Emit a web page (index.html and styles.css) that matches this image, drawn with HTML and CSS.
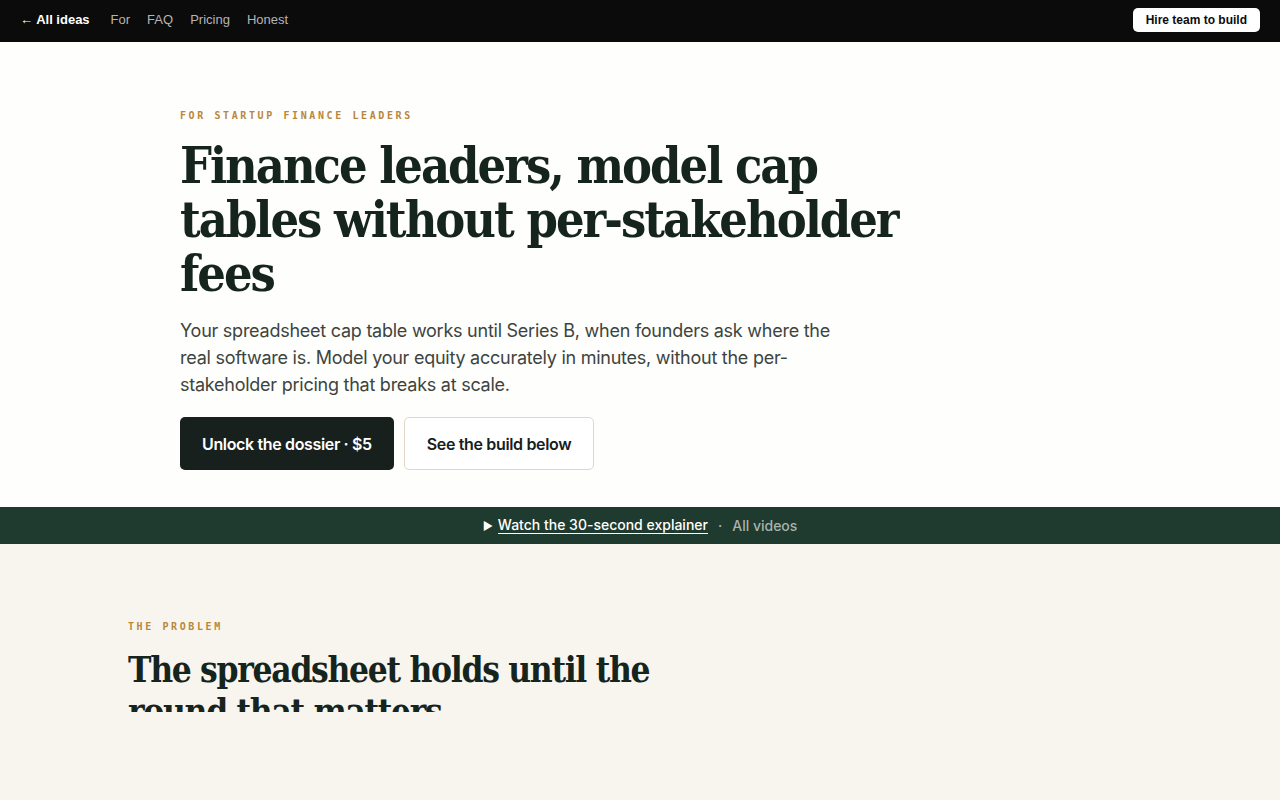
FILE: index.html
```html
<!DOCTYPE html>
<html lang="en">
<head>
    <meta charset="UTF-8">
    <meta name="viewport" content="width=device-width, initial-scale=1.0">
    <title>Cap tables for startup finance leaders</title>
    <link rel="stylesheet" href="styles.css">
</head>
<body>
    <nav class="topbar">
        <div class="topbar-links">
            <a class="back" href="#">&larr; All ideas</a>
            <a href="#">For</a>
            <a href="#">FAQ</a>
            <a href="#">Pricing</a>
            <a href="#">Honest</a>
        </div>
        <a class="hire" href="#">Hire team to build</a>
    </nav>

    <header class="hero">
        <div class="hero-inner">
            <p class="eyebrow">For startup finance leaders</p>
            <h1>Finance leaders, model cap tables without per-stakeholder fees</h1>
            <p class="lede">Your spreadsheet cap table works until Series B, when founders ask where the real software is. Model your equity accurately in minutes, without the per-stakeholder pricing that breaks at scale.</p>
            <div class="actions">
                <a class="btn btn-dark" href="#">Unlock the dossier &middot; $5</a>
                <a class="btn btn-light" href="#">See the build below</a>
            </div>
        </div>
    </header>

    <div class="video-strip">
        <span class="play">&#9654;</span>
        <a class="watch" href="#">Watch the 30-second explainer</a>
        <span class="sep">&middot;</span>
        <a class="all" href="#">All videos</a>
    </div>

    <section class="problem">
        <p class="eyebrow">The problem</p>
        <div class="reveal">
            <h2>The spreadsheet holds until the round that matters</h2>
        </div>
    </section>
</body>
</html>
```

FILE: styles.css
```css
* {
    box-sizing: border-box;
}

body {
    margin: 0;
    font-family: Inter, "Noto Sans", sans-serif;
    background: #f8f5ef;
    color: #17221d;
}

a {
    text-decoration: none;
    color: inherit;
}

/* top navigation */
.topbar {
    height: 42px;
    background: #0b0b0b;
    display: flex;
    align-items: center;
    justify-content: space-between;
    padding: 0 20px 3px;
    font-family: "Liberation Sans", Arial, sans-serif;
    font-size: 13px;
}

.topbar-links {
    display: flex;
    gap: 17px;
    color: #b4b4b4;
}

.topbar-links .back {
    color: #fff;
    font-weight: bold;
    margin-right: 4px;
}

.hire {
    background: #fff;
    color: #0b0b0b;
    font-weight: bold;
    font-size: 12px;
    padding: 5px 13px;
    border-radius: 5px;
}

/* hero */
.hero {
    background: #fefefd;
    padding: 68px 0 37px;
}

.hero-inner {
    margin-left: 180px;
    max-width: 760px;
}

.eyebrow {
    margin: 0;
    font-family: "DejaVu Sans Mono", monospace;
    font-weight: bold;
    font-size: 10px;
    letter-spacing: 2.6px;
    text-transform: uppercase;
    color: #b8873c;
}

h1 {
    margin: 18px 0 0;
    font-family: "DejaVu Serif", serif;
    font-stretch: condensed;
    font-weight: bold;
    font-size: 50px;
    line-height: 54px;
    letter-spacing: -2px;
    color: #16241e;
}

.lede {
    margin: 16px 0 0;
    max-width: 670px;
    font-size: 18px;
    line-height: 27px;
    letter-spacing: -0.25px;
    color: #3d4440;
}

.actions {
    display: flex;
    gap: 10px;
    margin-top: 19px;
}

.btn {
    display: inline-flex;
    align-items: center;
    height: 53px;
    padding: 0 22px;
    border-radius: 5px;
    font-size: 16px;
    font-weight: 600;
    letter-spacing: -0.35px;
}

.btn-dark {
    background: #17201c;
    color: #fff;
}

.btn-light {
    background: #fff;
    border: 1px solid #e0d7c6;
    color: #17201c;
}

/* video strip */
.video-strip {
    height: 37px;
    background: #1f3a2e;
    display: flex;
    align-items: center;
    justify-content: center;
    gap: 7px;
    font-size: 14px;
    font-weight: 500;
    color: #a9b3ad;
}

.play {
    color: #fff;
    font-size: 11px;
    margin-right: -2px;
}

.watch {
    color: #fff;
    border-bottom: 1px solid #fff;
    line-height: 16px;
}

.sep {
    margin: 0 3px;
}

/* problem section */
.problem {
    padding: 77px 128px 0;
    height: 256px;
}

.reveal {
    height: 63px;
    overflow: hidden;
    margin-top: 17px;
}

h2 {
    margin: 0;
    max-width: 560px;
    font-family: "DejaVu Serif", serif;
    font-stretch: condensed;
    font-weight: bold;
    font-size: 35px;
    line-height: 42px;
    letter-spacing: -1.3px;
    color: #16241e;
}
```
